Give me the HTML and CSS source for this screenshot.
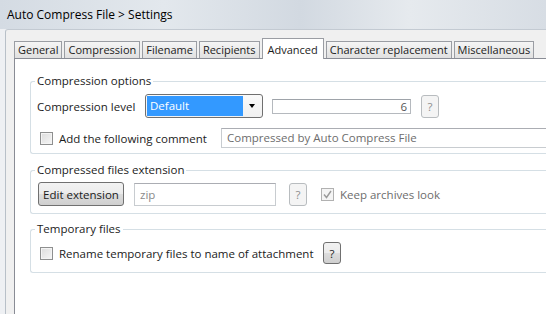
FILE: index.html
```html
<!DOCTYPE html>
<html lang="en">
<head>
  <meta charset="UTF-8">
  <title>Auto Compress File &gt; Settings</title>
  <link rel="stylesheet" href="styles.css">
</head>
<body>
  <div class="window">
    <div class="titlebar">Auto Compress File &gt; Settings</div>
    <div class="frame">
      <div class="tabs">
        <div class="tab">General</div>
        <div class="tab">Compression</div>
        <div class="tab">Filename</div>
        <div class="tab">Recipients</div>
        <div class="tab selected">Advanced</div>
        <div class="tab">Character replacement</div>
        <div class="tab">Miscellaneous</div>
      </div>

      <div class="panel">
        <fieldset class="group group-compression">
          <legend>Compression options</legend>
          <div class="row row-level">
            <span class="label level-label">Compression level</span>
            <div class="dropdown">
              <span class="dropdown-value">Default</span>
              <span class="dropdown-arrow"></span>
            </div>
            <div class="spin">6</div>
            <button class="help" disabled>?</button>
          </div>
          <div class="row row-comment">
            <label class="check comment-check"><span class="box"></span>Add the following comment</label>
            <div class="field comment-field">Compressed by Auto Compress File</div>
          </div>
        </fieldset>

        <fieldset class="group group-extension">
          <legend>Compressed files extension</legend>
          <div class="row row-ext">
            <button class="btn">Edit extension</button>
            <div class="field ext-field">zip</div>
            <button class="help" disabled>?</button>
            <label class="check disabled"><span class="box checked">
              <svg width="9" height="9" viewBox="0 0 9 9"><path d="M1 4.5 L3.5 7.5 L8 1" fill="none" stroke="#9a9a9a" stroke-width="1.4"/></svg>
            </span>Keep archives look</label>
          </div>
        </fieldset>

        <fieldset class="group group-temp">
          <legend>Temporary files</legend>
          <div class="row row-temp">
            <label class="check temp-check"><span class="box"></span>Rename temporary files to name of attachment</label>
            <button class="help active">?</button>
          </div>
        </fieldset>
      </div>
    </div>
  </div>
</body>
</html>
```

FILE: styles.css
```css
body {
  margin: 0;
  font-family: "Open Sans", "Noto Sans", sans-serif;
  font-size: 11.5px;
  color: #1b1b1b;
  background: #eef0f3;
}
.window {
  width: 546px;
  height: 314px;
  overflow: hidden;
}
.titlebar {
  height: 29px;
  line-height: 29px;
  padding-left: 7px;
  font-size: 12px;
  color: #000;
  background: linear-gradient(90deg, #d4dbe3 0%, #e3e8ed 30%, #d2d9e1 55%, #e6eaee 75%, #d7dde4 100%);
}
.frame {
  margin-left: 5px;
  padding: 8px 0 0 8px;
  height: 276px;
  background: #f0f0f0;
  border-top: 1px solid #c3cad2;
  border-left: 1px solid #b8c0c8;
  border-top-left-radius: 3px;
}

/* tab strip */
.tabs {
  display: flex;
  align-items: flex-end;
  height: 20px;
  font-size: 11px;
}
.tab {
  height: 16px;
  line-height: 16px;
  padding: 0 3px;
  margin-right: 2px;
  border: 1px solid #9a9da3;
  border-bottom: none;
  background: linear-gradient(#f5f5f5, #ebebeb 50%, #e0e0e0);
  white-space: nowrap;
}
.tab.selected {
  height: 20px;
  line-height: 21px;
  padding: 0 5px;
  margin: 0 2px -1px 0;
  background: #fff;
  position: relative;
  z-index: 1;
}

.panel {
  border: 1px solid #898c95;
  border-right: none;
  border-bottom: none;
  background: #fff;
  padding: 14px 0 0 15px;
  height: 241px;
}

/* group boxes */
.group {
  margin: 0;
  padding: 0 0 0 6px;
  border: 1px solid #d5dfe5;
  border-right: none;
  border-radius: 3px 0 0 3px;
}
.group legend {
  padding: 0 2px;
  margin-left: -2px;
  line-height: 16px;
}
.group-compression {
  padding-bottom: 5px;
}
.group-extension {
  margin-top: 8px;
  padding-bottom: 7px;
}
.group-temp {
  margin-top: 7px;
  padding-bottom: 8px;
}

.row {
  display: flex;
  align-items: center;
}
.row-level {
  height: 24px;
  margin-top: 5px;
}
.row-comment {
  height: 20px;
  margin-top: 10px;
}
.row-ext {
  height: 24px;
  margin-top: 4px;
}
.row-temp {
  height: 22px;
  margin-top: 5px;
}

.level-label {
  width: 108px;
}

.dropdown {
  box-sizing: border-box;
  width: 118px;
  height: 24px;
  border: 1px solid #707070;
  border-radius: 3px;
  background: linear-gradient(#fafafa, #f0f0f0);
  display: flex;
  align-items: center;
  padding: 1px;
}
.dropdown-value {
  width: 96px;
  height: 20px;
  line-height: 20px;
  padding-left: 3px;
  box-sizing: border-box;
  background: #3399ff;
  color: #fff;
}
.dropdown-arrow {
  margin-left: 6px;
  width: 0;
  height: 0;
  border-left: 3.5px solid transparent;
  border-right: 3.5px solid transparent;
  border-top: 4px solid #000;
}

.spin {
  box-sizing: border-box;
  margin-left: 9px;
  width: 139px;
  height: 15px;
  line-height: 13px;
  text-align: right;
  padding-right: 3px;
  border: 1px solid #b5b9be;
  border-top-color: #9ea3a9;
  color: #555;
}

.field {
  box-sizing: border-box;
  height: 20px;
  line-height: 18px;
  padding-left: 5px;
  border: 1px solid #c8ccd0;
  border-top-color: #abadb3;
  color: #6d6d6d;
  white-space: nowrap;
}
.comment-field {
  flex: 1;
  border-right: none;
}
.ext-field {
  margin-left: 10px;
  width: 142px;
  height: 23px;
  line-height: 21px;
  color: #8a8a8a;
}

/* buttons */
.help {
  box-sizing: border-box;
  margin-left: 10px;
  width: 18px;
  height: 23px;
  padding: 0;
  font: inherit;
  color: #8d8d8d;
  border: 1px solid #b8bcbf;
  border-radius: 3px;
  background: #f4f4f4;
}
.help.active {
  margin-left: 14px;
  height: 22px;
  color: #1b1b1b;
  border-color: #707070;
  background: linear-gradient(#f2f2f2, #ebebeb 50%, #dddddd 50%, #cfcfcf);
}
.row-ext .help {
  margin-left: 13px;
}
.btn {
  box-sizing: border-box;
  margin-left: 1px;
  width: 86px;
  height: 24px;
  padding: 0;
  font: inherit;
  color: #1b1b1b;
  border: 1px solid #707070;
  border-radius: 3px;
  background: linear-gradient(#f2f2f2, #ebebeb 50%, #dddddd 50%, #cfcfcf);
}

/* checkboxes */
.check {
  display: flex;
  align-items: center;
  white-space: nowrap;
}
.check .box {
  box-sizing: border-box;
  flex-shrink: 0;
  width: 13px;
  height: 13px;
  margin: 0 6px 0 3px;
  border: 1px solid #8e8f8f;
  background: linear-gradient(135deg, #dcdcdc, #f6f6f6);
  box-shadow: inset 0 0 0 1px #f4f4f4;
  display: flex;
  align-items: center;
  justify-content: center;
}
.comment-check {
  width: 184px;
}
.temp-check {
  width: 272px;
}
.check.disabled {
  margin-left: 11px;
  color: #6d6d6d;
}
.check .box.checked {
  border-color: #b1b1b1;
  background: #f4f4f4;
}
```
